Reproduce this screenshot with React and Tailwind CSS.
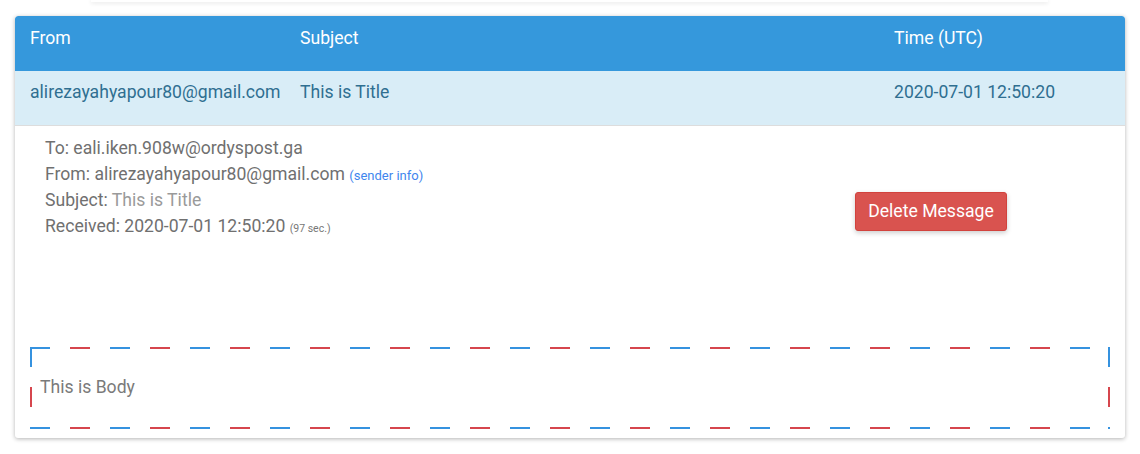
export default function App() {
  return (
    <div className="min-h-[454px] bg-white font-['Roboto','Liberation_Sans',sans-serif]">
      <div className="ml-[91px] w-[957px] h-[2px] bg-white shadow-[0_1px_4px_rgba(0,0,0,0.14)]" />
      <div className="mx-[15px] mt-[14px] rounded-[3px] bg-white shadow-[0_1px_4px_rgba(0,0,0,0.3)] pb-[9px] overflow-hidden">
        {/* header */}
        <div className="grid grid-cols-[270px_594px_1fr] h-[55px] bg-[#3598dc] text-white text-[17.6px] leading-[25.6px] pt-[10px] rounded-t-[3px]">
          <div className="pl-[15px]">From</div>
          <div className="pl-[15px]">Subject</div>
          <div className="pl-[15px]">Time (UTC)</div>
        </div>
        {/* row */}
        <div className="grid grid-cols-[270px_594px_1fr] h-[55px] bg-[#d9edf7] text-[#2f6f91] text-[17.6px] leading-[25.6px] pt-[9px] border-b border-[#dddddd]">
          <div className="pl-[15px]">alirezayahyapour80@gmail.com</div>
          <div className="pl-[15px]">This is Title</div>
          <div className="pl-[15px]">2020-07-01 12:50:20</div>
        </div>
        {/* details */}
        <div className="flex h-[221px] pt-[10px] pl-[30px]">
          <div className="w-[810px] text-[17.6px] leading-[25.6px] text-[#707070]">
            <div>To: eali.iken.908w@ordyspost.ga</div>
            <div>
              From: alirezayahyapour80@gmail.com{" "}
              <span className="text-[13px] text-[#3f86ee]">(sender info)</span>
            </div>
            <div>
              Subject: <span className="text-[#9a9a9a]">This is Title</span>
            </div>
            <div>
              Received: 2020-07-01 12:50:20{" "}
              <span className="text-[10.5px] text-[#777777]">(97 sec.)</span>
            </div>
          </div>
          <div>
            <button className="mt-[56px] h-[39px] w-[152px] rounded-[3px] bg-[#d9534f] border border-[#d2423d] text-white text-[17.6px] leading-none shadow-[0_2px_5px_rgba(0,0,0,0.2)]">
              Delete Message
            </button>
          </div>
        </div>
        {/* body */}
        <div className="mx-[15px] h-[82px] flex items-center pl-[10px] pb-[2px] text-[17.6px] text-[#7a7a7a] [background:repeating-linear-gradient(90deg,#3592df_0_20px,transparent_20px_40px,#d6464d_40px_60px,transparent_60px_80px)_top_left/100%_2px_no-repeat,repeating-linear-gradient(90deg,#3592df_0_20px,transparent_20px_40px,#d6464d_40px_60px,transparent_60px_80px)_bottom_left/100%_2px_no-repeat,repeating-linear-gradient(180deg,#3592df_0_20px,transparent_20px_40px,#d6464d_40px_60px,transparent_60px_80px)_top_left/2px_100%_no-repeat,repeating-linear-gradient(180deg,#3592df_0_20px,transparent_20px_40px,#d6464d_40px_60px,transparent_60px_80px)_top_right/2px_100%_no-repeat]">
          This is Body
        </div>
      </div>
    </div>
  );
}
